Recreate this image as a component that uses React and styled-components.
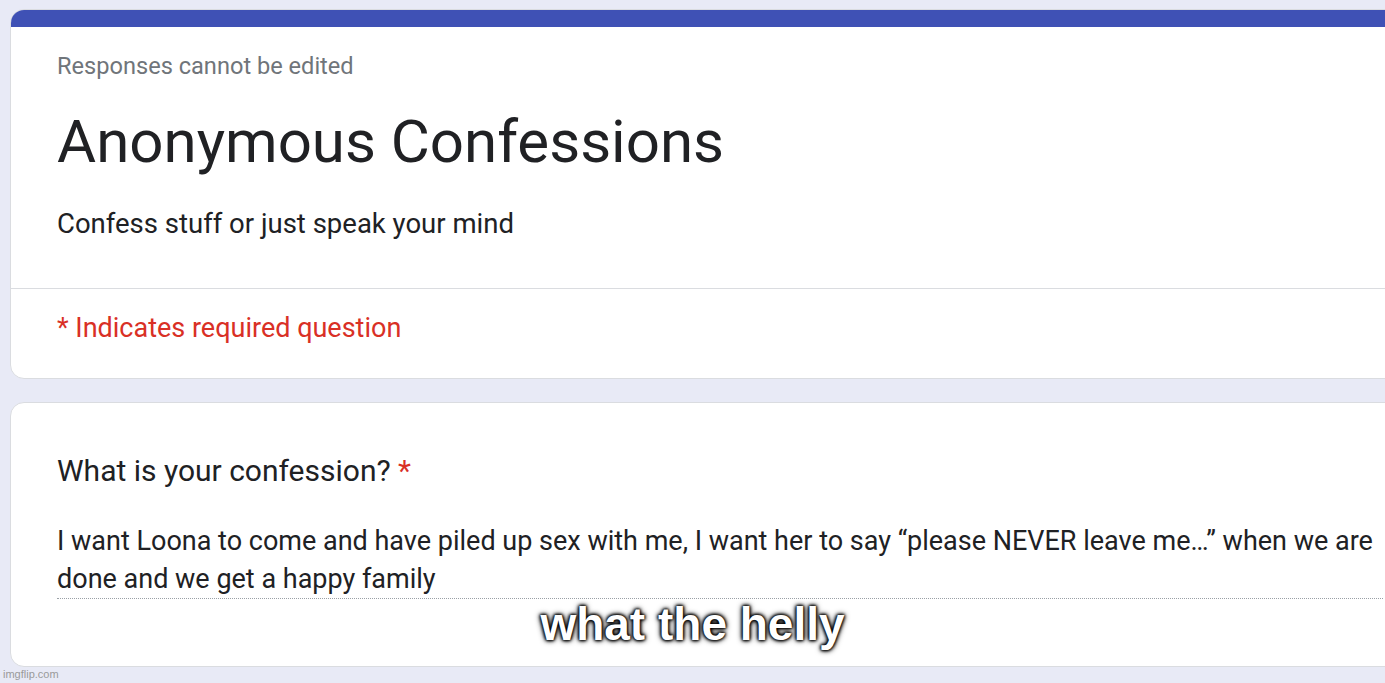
import styled, { createGlobalStyle } from 'styled-components';

const GlobalStyle = createGlobalStyle`
  html, body {
    margin: 0;
    padding: 0;
    background: #e8eaf6;
    overflow: hidden;
  }
  * {
    box-sizing: border-box;
  }
`;

const Page = styled.div`
  position: relative;
  width: 1385px;
  height: 683px;
  padding: 9px 0 0 10px;
  background: #e8eaf6;
  font-family: Roboto, "Noto Sans", sans-serif;
  color: #202124;
  overflow: hidden;
`;

const Card = styled.div`
  width: 1420px;
  background: #fff;
  border: 1px solid #dadce0;
  border-radius: 14px;
  overflow: hidden;
  margin-bottom: ${(p) => p.$gap || 0}px;
`;

const TopBar = styled.div`
  height: 17px;
  background: #3f51b5;
`;

const Header = styled.div`
  padding: 0 46px 48px;
  border-bottom: 1px solid #dadce0;
`;

const Notice = styled.div`
  margin-top: 25px;
  font-size: 23.6px;
  line-height: 28px;
  color: #70757a;
`;

const Title = styled.h1`
  margin: 26px 0 0;
  font-size: 60px;
  line-height: 72px;
  font-weight: 400;
`;

const Description = styled.div`
  margin-top: 30px;
  font-size: 27.5px;
  line-height: 32px;
`;

const Required = styled.div`
  padding: 23px 46px 34px;
  font-size: 27px;
  line-height: 32px;
  color: #d93025;
`;

const Question = styled.div`
  padding: 52px 46px 67px;
`;

const Label = styled.div`
  font-size: 30px;
  line-height: 32px;
`;

const Star = styled.span`
  color: #d93025;
`;

const Answer = styled.div`
  margin-top: 35px;
  font-size: 27px;
  line-height: 38px;
  white-space: nowrap;
  border-bottom: 1px dotted #9aa0a6;
`;

const Caption = styled.div`
  position: absolute;
  left: 0;
  right: 0;
  top: 601px;
  text-align: center;
  font-family: "Liberation Sans", Arial, sans-serif;
  font-weight: 700;
  font-size: 46px;
  line-height: 46px;
  color: #fff;
  text-shadow: 0 0 3px #000, 0 0 3px #000, 0 0 4px #000, 0 0 6px #000;
`;

const Watermark = styled.div`
  position: absolute;
  left: 3px;
  bottom: 3px;
  font-family: "Liberation Sans", Arial, sans-serif;
  font-size: 11px;
  color: #9a9a9a;
`;

export default function App() {
  return (
    <Page>
      <GlobalStyle />
      <Card $gap={23}>
        <TopBar />
        <Header>
          <Notice>Responses cannot be edited</Notice>
          <Title>Anonymous Confessions</Title>
          <Description>Confess stuff or just speak your mind</Description>
        </Header>
        <Required>* Indicates required question</Required>
      </Card>
      <Card>
        <Question>
          <Label>
            What is your confession? <Star>*</Star>
          </Label>
          <Answer>
            I want Loona to come and have piled up sex with me, I want her to say “please NEVER leave me…” when we are
            <br />
            done and we get a happy family
          </Answer>
        </Question>
      </Card>
      <Caption>what the helly</Caption>
      <Watermark>imgflip.com</Watermark>
    </Page>
  );
}
